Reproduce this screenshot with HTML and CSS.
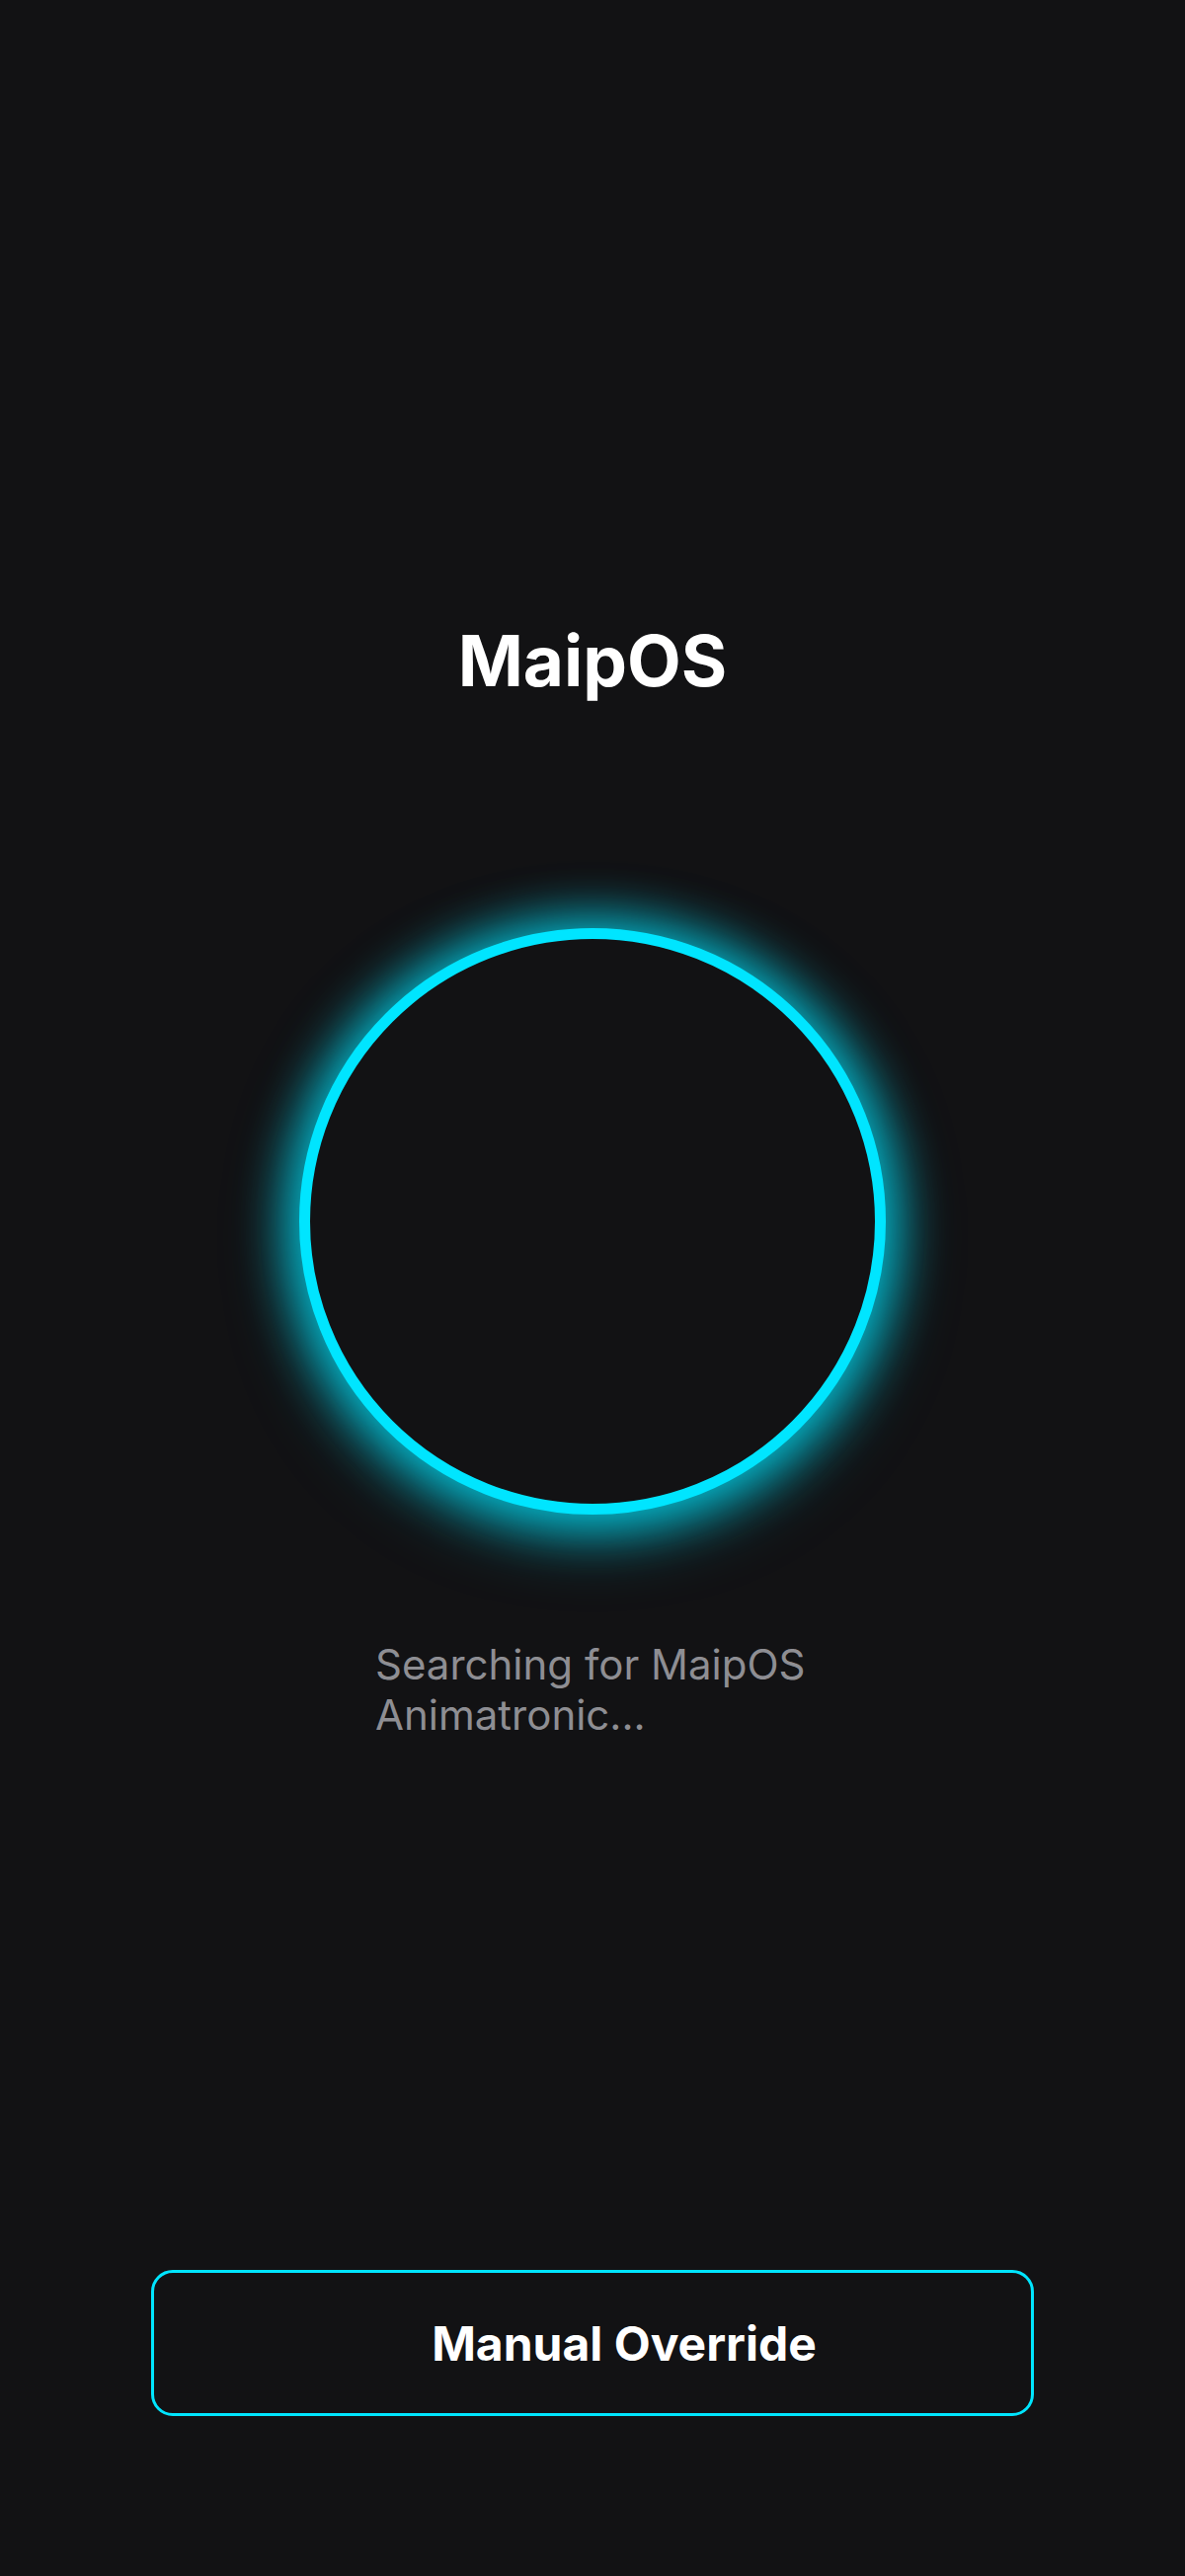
FILE: index.html
```html
<!DOCTYPE html>
<html lang="en">
<head>
<meta charset="UTF-8" />
<meta name="viewport" content="width=device-width, initial-scale=1" />
<title>MaipOS</title>
<link rel="stylesheet" href="styles.css">
</head>
<body>
  <main class="screen">
    <h1 class="brand">MaipOS</h1>

    <div class="scanner" aria-hidden="true"></div>

    <p class="status">Searching for MaipOS Animatronic...</p>

    <button class="override-btn" type="button">Manual Override</button>
  </main>
</body>
</html>
```

FILE: styles.css
```css
/* Reset */
* {
  box-sizing: border-box;
}
html, body {
  margin: 0;
  padding: 0;
  background: #121214;
  font-family: Inter, 'Noto Sans', sans-serif;
  -webkit-font-smoothing: antialiased;
}

/* Main column */
.screen {
  min-height: 100vh;
  display: flex;
  flex-direction: column;
  align-items: center;
  padding: 627px 0 162px;
}

/* Title */
.brand {
  margin: 0;
  font-size: 71px;
  line-height: 1.2;
  font-weight: 700;
  color: #fff;
}

/* Glowing ring */
.scanner {
  width: 594px;
  height: 594px;
  margin-top: 228px;
  border-radius: 50%;
  border: 11px solid #00e5ff;
  background: #121214;
  box-shadow: 0 0 50px 10px rgba(0, 229, 255, 0.7),
              0 16px 70px rgba(0, 229, 255, 0.5);
}

/* Status text */
.status {
  width: 440px;
  margin: 126px 0 0;
  font-size: 42px;
  line-height: 51px;
  color: #8e8e93;
}

/* Button */
.override-btn {
  margin-top: auto;
  width: 894px;
  height: 148px;
  padding: 0 0 0 64px;
  background: transparent;
  border: 3px solid #00e5ff;
  border-radius: 22px;
  color: #fff;
  font-family: inherit;
  font-size: 48px;
  font-weight: 700;
  cursor: pointer;
}
```
